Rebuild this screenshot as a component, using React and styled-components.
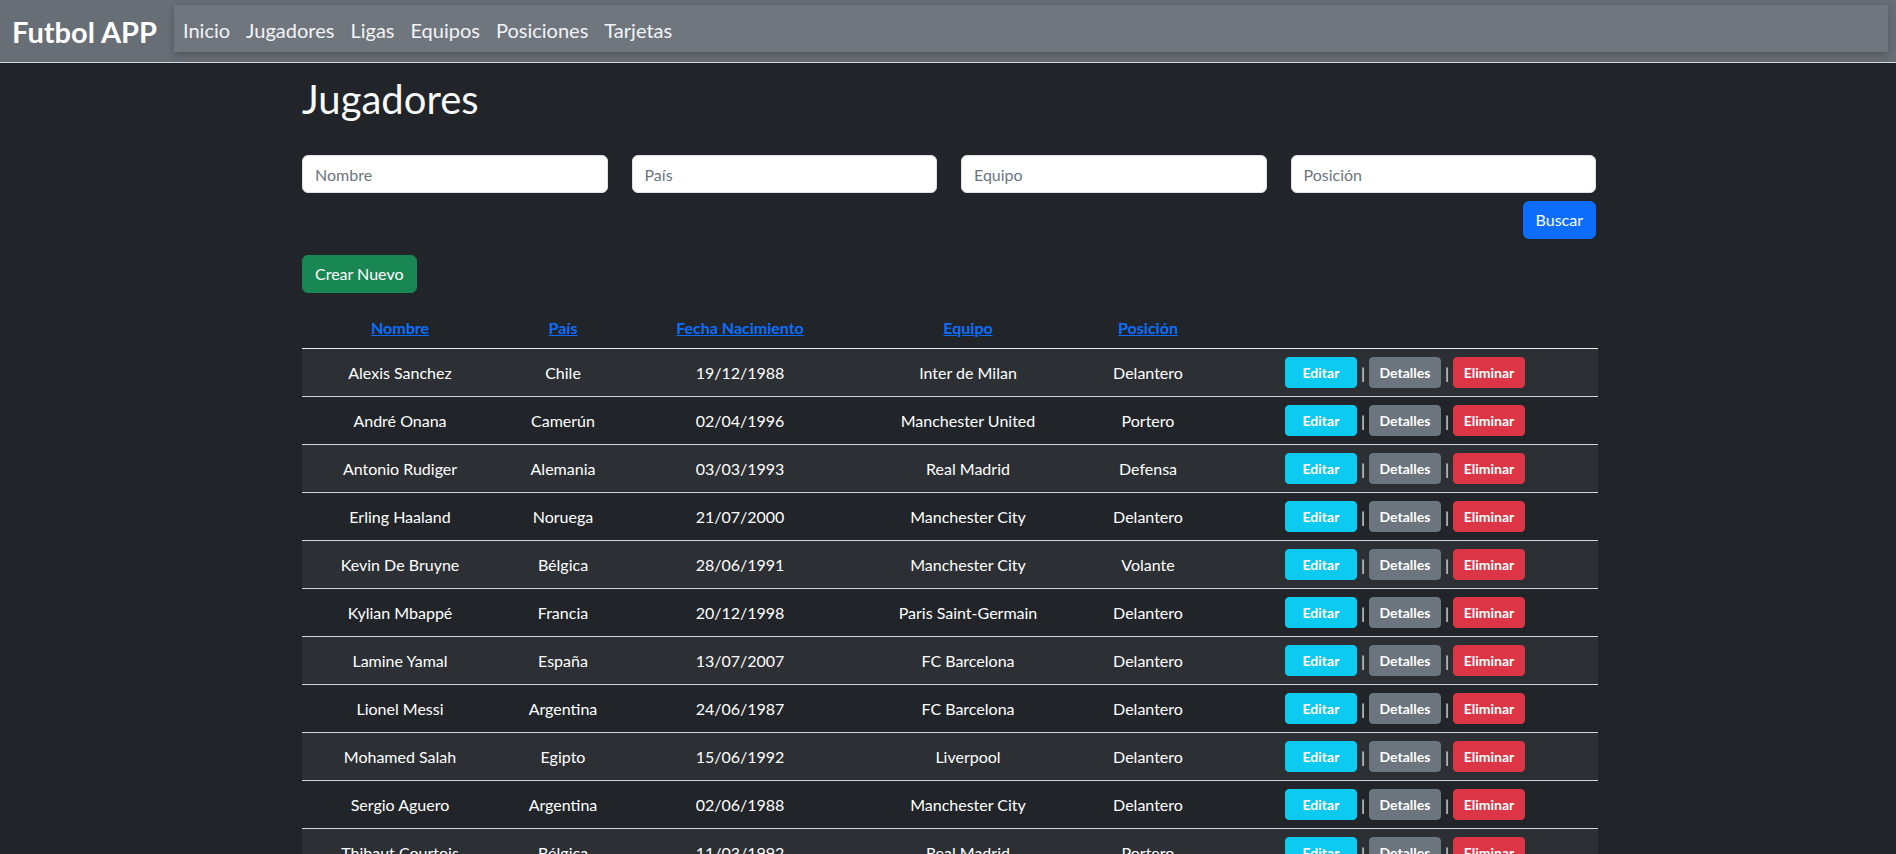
import React from "react";
import styled, { createGlobalStyle } from "styled-components";

const players = [
  ["Alexis Sanchez", "Chile", "19/12/1988", "Inter de Milan", "Delantero"],
  ["André Onana", "Camerún", "02/04/1996", "Manchester United", "Portero"],
  ["Antonio Rudiger", "Alemania", "03/03/1993", "Real Madrid", "Defensa"],
  ["Erling Haaland", "Noruega", "21/07/2000", "Manchester City", "Delantero"],
  ["Kevin De Bruyne", "Bélgica", "28/06/1991", "Manchester City", "Volante"],
  ["Kylian Mbappé", "Francia", "20/12/1998", "Paris Saint-Germain", "Delantero"],
  ["Lamine Yamal", "España", "13/07/2007", "FC Barcelona", "Delantero"],
  ["Lionel Messi", "Argentina", "24/06/1987", "FC Barcelona", "Delantero"],
  ["Mohamed Salah", "Egipto", "15/06/1992", "Liverpool", "Delantero"],
  ["Sergio Aguero", "Argentina", "02/06/1988", "Manchester City", "Delantero"],
  ["Thibaut Courtois", "Bélgica", "11/03/1992", "Real Madrid", "Portero"],
];

const columns = [
  { label: "Nombre", width: 196 },
  { label: "País", width: 130 },
  { label: "Fecha Nacimiento", width: 224 },
  { label: "Equipo", width: 232 },
  { label: "Posición", width: 128 },
  { label: "", width: 386 },
];

const GlobalStyle = createGlobalStyle`
  * { box-sizing: border-box; }
  body {
    margin: 0;
    background: #212529;
    color: #fff;
    font-family: Lato, "Noto Sans", sans-serif;
  }
`;

const Navbar = styled.header`
  display: flex;
  align-items: flex-start;
  height: 63px;
  padding: 5px 8px 0 12px;
  background: #686e75;
  border-bottom: 1px solid #d3d7db;
`;

const Brand = styled.a`
  margin-top: 9px;
  font-size: 29px;
  font-weight: 700;
  line-height: 35px;
  color: #fff;
  text-decoration: none;
  white-space: nowrap;
`;

const NavBox = styled.nav`
  flex: 1;
  display: flex;
  align-items: center;
  gap: 16px;
  height: 47px;
  margin-left: 17px;
  padding: 3px 0 0 9px;
  background: #6f767e;
  box-shadow: 0 3px 8px rgba(0, 0, 0, 0.22);
`;

const NavLink = styled.a`
  font-size: 20px;
  line-height: 24px;
  color: #f3f4f6;
  text-decoration: none;
`;

const Container = styled.main`
  width: 1296px;
  margin: 0 auto;
  padding-left: 2px;
`;

const Title = styled.h1`
  margin: 12px 0 32px;
  font-size: 40px;
  font-weight: 400;
  line-height: 48px;
  color: #f8f9fa;
`;

const FilterGrid = styled.div`
  display: grid;
  grid-template-columns: repeat(4, 1fr);
  gap: 24px;
`;

const Input = styled.input`
  height: 38px;
  padding: 6px 12px;
  border: 1px solid #dee2e6;
  border-radius: 6px;
  background: #fff;
  font-family: inherit;
  font-size: 16px;
  color: #212529;
  &::placeholder { color: #6c757d; }
`;

const ButtonRow = styled.div`
  display: flex;
  justify-content: ${(p) => (p.$end ? "flex-end" : "flex-start")};
  margin-top: ${(p) => p.$top}px;
`;

const Button = styled.button`
  height: 38px;
  padding: 6px 12px;
  border: 1px solid ${(p) => p.$bg};
  border-radius: 6px;
  background: ${(p) => p.$bg};
  color: #fff;
  font-family: inherit;
  font-size: 16px;
  line-height: 24px;
`;

const Table = styled.table`
  width: 100%;
  margin-top: 16px;
  border-collapse: collapse;
  table-layout: fixed;
`;

const Th = styled.th`
  padding: 7px 8px 8px;
  font-size: 16px;
  font-weight: 700;
  line-height: 24px;
  text-align: center;
  border-bottom: 1px solid #eceef0;
`;

const SortLink = styled.a`
  color: #0d6efd;
  text-decoration: underline;
`;

const Row = styled.tr`
  background: ${(p) => (p.$odd ? "#2c3034" : "#212529")};
  border-bottom: 1px solid #cfd3d7;
`;

const Td = styled.td`
  padding: 8px;
  font-size: 16px;
  line-height: 24px;
  text-align: center;
  vertical-align: middle;
  color: #fff;
`;

const Actions = styled.div`
  display: flex;
  justify-content: center;
  align-items: center;
  gap: 4px;
`;

const SmallButton = styled.button`
  width: 72px;
  height: 31px;
  padding: 4px 6px;
  border: 1px solid ${(p) => p.$bg};
  border-radius: 4px;
  background: ${(p) => p.$bg};
  color: #fff;
  font-family: inherit;
  font-size: 14px;
  font-weight: 700;
  line-height: 21px;
`;

const Sep = styled.span`
  font-size: 16px;
  color: #e9ecef;
`;

function App() {
  return (
    <>
      <GlobalStyle />
      <Navbar>
        <Brand href="#">Futbol APP</Brand>
        <NavBox>
          {["Inicio", "Jugadores", "Ligas", "Equipos", "Posiciones", "Tarjetas"].map((l) => (
            <NavLink key={l} href="#">{l}</NavLink>
          ))}
        </NavBox>
      </Navbar>
      <Container>
        <Title>Jugadores</Title>
        <FilterGrid>
          <Input placeholder="Nombre" />
          <Input placeholder="País" />
          <Input placeholder="Equipo" />
          <Input placeholder="Posición" />
        </FilterGrid>
        <ButtonRow $end $top={8}>
          <Button $bg="#0d6efd">Buscar</Button>
        </ButtonRow>
        <ButtonRow $top={16}>
          <Button $bg="#198754">Crear Nuevo</Button>
        </ButtonRow>
        <Table>
          <colgroup>
            {columns.map((c, i) => (
              <col key={i} style={{ width: c.width }} />
            ))}
          </colgroup>
          <thead>
            <tr>
              {columns.map((c, i) => (
                <Th key={i}>{c.label && <SortLink href="#">{c.label}</SortLink>}</Th>
              ))}
            </tr>
          </thead>
          <tbody>
            {players.map((p, i) => (
              <Row key={p[0]} $odd={i % 2 === 0}>
                {p.map((v, j) => (
                  <Td key={j}>{v}</Td>
                ))}
                <Td>
                  <Actions>
                    <SmallButton $bg="#0dcaf0">Editar</SmallButton>
                    <Sep>|</Sep>
                    <SmallButton $bg="#6c757d">Detalles</SmallButton>
                    <Sep>|</Sep>
                    <SmallButton $bg="#dc3545">Eliminar</SmallButton>
                  </Actions>
                </Td>
              </Row>
            ))}
          </tbody>
        </Table>
      </Container>
    </>
  );
}

export default App;
